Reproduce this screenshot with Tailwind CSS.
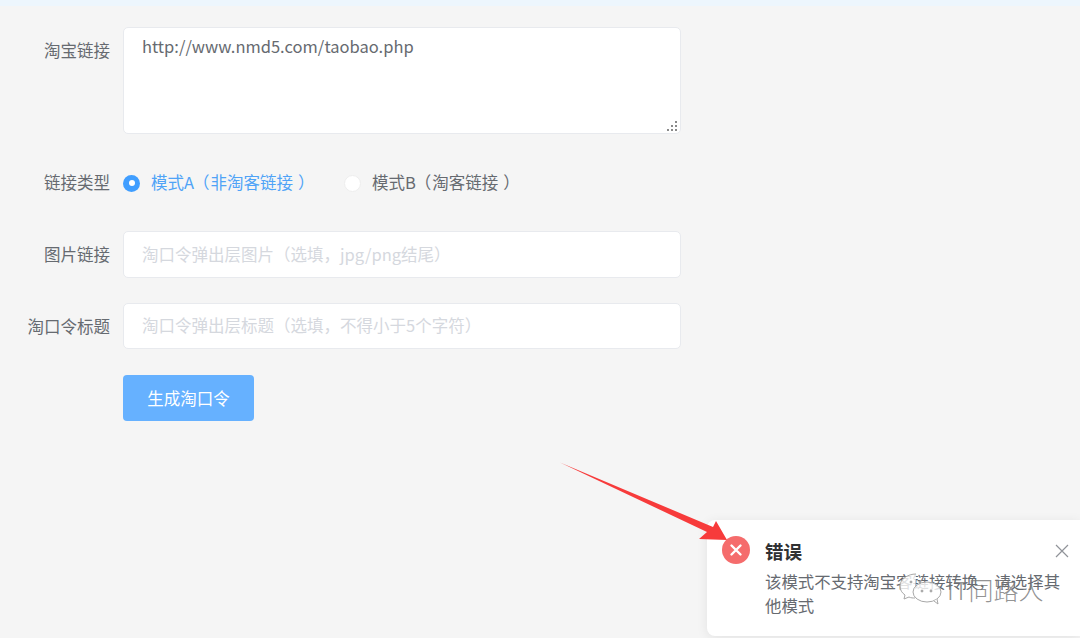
<!DOCTYPE html>
<html lang="zh-CN">
<head>
<meta charset="utf-8">
<script src="https://cdn.jsdelivr.net/npm/@tailwindcss/browser@4"></script>
<title>淘口令</title>
</head>
<body class="m-0 overflow-hidden">
<div class="relative h-[638px] w-[1080px] overflow-hidden bg-[#f5f5f5] font-['Noto_Sans_CJK_SC','Noto_Sans',sans-serif] text-[16.5px] text-[#666a70]">
  <div class="h-[6px] bg-[#edf6fd]"></div>
  <form class="flex w-[681px] flex-col pt-[21px]">
    <div class="flex items-start gap-[13px]">
      <label class="w-[110px] pt-[11px] text-right leading-[24px]">淘宝链接</label>
      <div class="relative">
        <textarea class="block h-[107px] w-[558px] resize-none rounded-[5px] border border-[#e8eaee] bg-white px-[18px] py-[6px] leading-[24px] text-[#666a70] outline-none">http://www.nmd5.com/taobao.php</textarea>
        <svg class="absolute bottom-[2px] right-[3px] h-[11px] w-[11px]" viewBox="0 0 11 11" fill="#8a8a8a"><rect x="8" y="0" width="2" height="2"/><rect x="4" y="4" width="2" height="2"/><rect x="8" y="4" width="2" height="2"/><rect x="0" y="8" width="2" height="2"/><rect x="4" y="8" width="2" height="2"/><rect x="8" y="8" width="2" height="2"/></svg>
      </div>
    </div>
    <div class="mt-[37px] flex h-[24px] items-center gap-[13px]">
      <label class="w-[110px] pb-[2px] text-right leading-[24px]">链接类型</label>
      <div class="flex items-center">
        <span class="flex h-[17px] w-[17px] items-center justify-center rounded-full bg-[#409eff]"><span class="h-[6px] w-[6px] rounded-full bg-white"></span></span>
        <span class="ml-[11px] w-[159px] pb-[2px] text-[#4fa3f7]">模式A<span class="relative -left-[1px]">（</span>非淘客链接<span class="relative left-[5px]">）</span></span>
        <span class="ml-[34px] h-[17px] w-[17px] rounded-full border border-[#eeeeee] bg-white"></span>
        <span class="ml-[11px] pb-[2px]">模式B<span class="relative -left-[1px]">（</span>淘客链接<span class="relative left-[5px]">）</span></span>
      </div>
    </div>
    <div class="mt-[36px] flex items-center gap-[13px]">
      <label class="w-[110px] text-right">图片链接</label>
      <input class="h-[47px] w-[558px] rounded-[5px] border border-[#e8eaee] bg-white px-[18px] pb-[2px] font-['Noto_Sans_CJK_TC','Noto_Sans',sans-serif] outline-none placeholder:text-[#d5d8de]" placeholder="淘口令弹出层图片（选填，jpg/png结尾）">
    </div>
    <div class="mt-[25px] flex items-center gap-[13px]">
      <label class="w-[110px] text-right">淘口令标题</label>
      <input class="h-[46px] w-[558px] rounded-[5px] border border-[#e8eaee] bg-white px-[18px] pb-[2px] font-['Noto_Sans_CJK_TC','Noto_Sans',sans-serif] outline-none placeholder:text-[#d5d8de]" placeholder="淘口令弹出层标题（选填，不得小于5个字符）">
    </div>
    <div class="mt-[26px] flex gap-[13px]">
      <div class="w-[110px]"></div>
      <button type="button" class="h-[46px] w-[131px] rounded-[4px] bg-[#66b1ff] text-white">生成淘口令</button>
    </div>
  </form>

  <div class="absolute left-[707px] top-[520px] flex h-[116px] w-[373px] rounded-l-[8px] bg-white pl-[15px] pt-[16px] shadow-[0_2px_12px_rgba(0,0,0,0.08)]">
    <svg class="h-[28px] w-[28px] shrink-0" viewBox="0 0 28 28"><circle cx="14" cy="14" r="14" fill="#f56c6c"/><path d="M9.5 9.5l9 9M18.5 9.5l-9 9" stroke="#fff" stroke-width="2.4" stroke-linecap="round"/></svg>
    <div class="ml-[15px] w-[300px]">
      <div class="pb-[1px] text-[18.5px] font-bold leading-[31px] text-[#303133]">错误</div>
      <p class="mt-[1px] text-[16.4px] leading-[24px] text-[#666a70]">该模式不支持淘宝客链接转换，请选择其他模式</p>
    </div>
    <svg class="absolute right-[11px] top-[24px] h-[14px] w-[14px]" viewBox="0 0 14 14"><path d="M1 1l12 12M13 1L1 13" stroke="#909399" stroke-width="1.2"/></svg>
  </div>

  <svg class="absolute left-[560px] top-[462px] h-[82px] w-[170px]" viewBox="0 0 170 82"><path d="M-1 0L153 65L156 59L167 78L139 77L147 70Z" fill="#f73b3b"/></svg>

  <div class="absolute left-[898px] top-[572px] flex items-center">
    <svg class="h-[34px] w-[46px]" viewBox="0 0 46 34" fill="#fff" fill-opacity="0.8" stroke="#a8a8a8" stroke-width="1"><path d="M18 2C10 2 2 7 2 14c0 4 2 7 5 9l-1 4 5-2c2 1 4 1 6 1"/><ellipse cx="29" cy="20" rx="14" ry="10"/><path d="M36 29l4 3-1-5"/><circle cx="24" cy="19" r="1" fill="#888"/><circle cx="33" cy="19" r="1" fill="#888"/><circle cx="13" cy="10" r="1" fill="#888"/><circle cx="22" cy="10" r="1" fill="#888"/></svg>
    <span class="ml-[3px] text-[25px] font-light leading-[34px] text-[#777]/80">IT同路人</span>
  </div>
</div>
</body>
</html>
